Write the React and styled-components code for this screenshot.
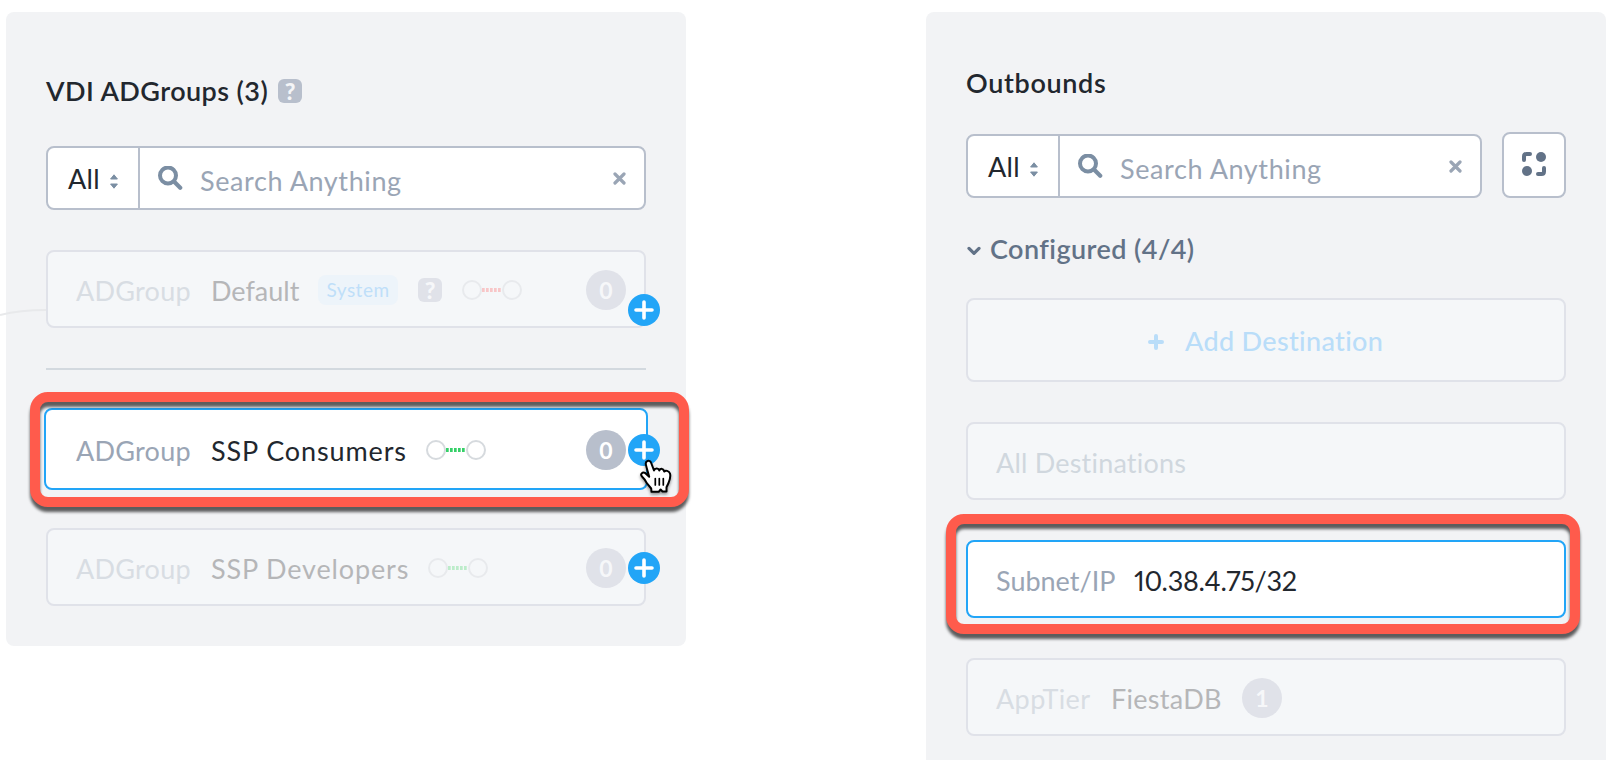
import React from "react";
import styled, { createGlobalStyle } from "styled-components";

const GlobalStyle = createGlobalStyle`
  *, *::before, *::after { box-sizing: border-box; }
  body {
    margin: 0;
    background: #fff;
    overflow: hidden;
    font-family: Lato, "Open Sans", sans-serif;
    font-size: 27px;
    line-height: 36px;
    color: #22272e;
  }
`;

const Page = styled.main`
  position: relative;
  display: flex;
  align-items: flex-start;
  gap: 240px;
  width: 1624px;
  height: 760px;
  padding: 12px 0 0 6px;
  overflow: hidden;
`;

const Panel = styled.section`
  flex: none;
  width: 680px;
  height: ${(p) => p.$height}px;
  padding: ${(p) => p.$top}px 40px 0;
  border-radius: 8px;
  background: #f2f3f5;
`;

const Label = styled.span`
  flex: none;
  width: ${(p) => p.$width}px;
  letter-spacing: ${(p) => p.$spacing || 0}px;
  white-space: nowrap;
`;

const Title = styled.h2`
  display: flex;
  align-items: center;
  height: 36px;
  margin: 0;
  font-size: 27px;
  font-weight: 600;
`;

const HelpBadge = styled.span`
  flex: none;
  width: 24px;
  height: 24px;
  margin-left: ${(p) => p.$gap}px;
  border-radius: 6px;
  background: ${(p) => (p.$muted ? "#e0e2e9" : "#b8bfcc")};
  color: ${(p) => (p.$muted ? "#f6f7f9" : "#f4f5f7")};
  font-size: 23px;
  font-weight: 900;
  line-height: 25px;
  text-align: center;
`;

const SearchRow = styled.div`
  display: flex;
  align-items: flex-end;
  gap: 20px;
  margin-top: ${(p) => p.$gap}px;
`;

const SearchBox = styled.div`
  display: flex;
  flex: 1;
  height: 64px;
  border: 2px solid #b8bfcc;
  border-radius: 8px;
  background: #fff;
`;

const Scope = styled.div`
  display: flex;
  align-items: center;
  width: 92px;
  padding: 2px 0 0 20px;
  border-right: 2px solid #b8bfcc;
  svg { margin: 4px 0 0 11px; }
`;

const SearchField = styled.div`
  display: flex;
  flex: 1;
  align-items: center;
  padding: 0 18px 0 18px;
  color: #9aa5b5;
`;

const Placeholder = styled(Label)`
  margin-left: 17px;
  padding-top: 5px;
`;

const ClearIcon = styled.svg`
  margin: 0 0 0 auto;
`;

const SquareButton = styled.button`
  display: flex;
  align-items: center;
  justify-content: center;
  width: 64px;
  height: 66px;
  padding: 0 0 2px;
  border: 2px solid #b8bfcc;
  border-radius: 8px;
  background: #fff;
`;

const Row = styled.div`
  position: relative;
  display: flex;
  align-items: center;
  height: ${(p) => (p.$selected ? 82 : 78)}px;
  margin: ${(p) => (p.$selected ? p.$gap - 2 : p.$gap)}px ${(p) => (p.$selected ? -2 : 0)}px ${(p) => (p.$selected ? -2 : 0)}px;
  padding: 2px 0 0 ${(p) => (p.$selected ? 30 : 28)}px;
  border: 2px solid ${(p) => (p.$active ? "#22a5f7" : "#e0e2e9")};
  border-radius: 8px;
  background: ${(p) => (p.$active ? "#fff" : "#f5f7f9")};
`;

const Kind = styled(Label)`
  padding-top: 1px;
  color: ${(p) => (p.$active ? "#9aa5b5" : p.$plain ? "#d0d7de" : "#d8dde3")};
`;

const Name = styled(Label)`
  margin-left: ${(p) => p.$gap}px;
  padding-top: 1px;
  color: ${(p) => (p.$active ? "#22272e" : "#b5b6b8")};
  font-variant-numeric: proportional-nums;
`;

const Tag = styled.span`
  flex: none;
  width: 80px;
  height: 30px;
  margin-left: 20px;
  border-radius: 8px;
  background: #edf4fa;
  color: #bfdff9;
  font-size: 19px;
  line-height: 29px;
  letter-spacing: 0.5px;
  text-align: center;
`;

const Link = styled.svg`
  flex: none;
  margin-left: ${(p) => p.$gap}px;
`;

const Count = styled.span`
  flex: none;
  width: 40px;
  height: 40px;
  margin-left: ${(p) => (p.$gap ? p.$gap + "px" : "auto")};
  margin-right: ${(p) => (p.$selected ? 20 : 18)}px;
  border-radius: 50%;
  background: ${(p) => (p.$active ? "#b8bfcc" : "#e0e2e9")};
  color: ${(p) => (p.$active ? "#fff" : "#f6f7f9")};
  font-size: 23px;
  font-weight: 700;
  line-height: 40px;
  text-align: center;
`;

const AddNode = styled.button`
  position: absolute;
  top: ${(p) => p.$top}px;
  right: ${(p) => (p.$selected ? -14 : -16)}px;
  width: 32px;
  height: 32px;
  padding: 0;
  border: 0;
  border-radius: 50%;
  background: #22a5f7;
  svg { display: block; }
`;

const Divider = styled.hr`
  height: 2px;
  margin: 40px 0 0;
  border: 0;
  background: #d3d9df;
`;

const GroupHeading = styled.div`
  display: flex;
  align-items: center;
  height: 36px;
  margin-top: 33px;
  color: #627287;
  font-weight: 600;
  svg { margin: 3px 9px 0 1px; }
`;

const AddRow = styled.button`
  display: flex;
  align-items: center;
  width: 600px;
  height: 84px;
  margin-top: 31px;
  padding: 1px 0 0 180px;
  border: 2px solid #e0e2e9;
  border-radius: 8px;
  background: #f5f7f9;
  color: #b9ddf9;
  font-family: inherit;
  font-size: 27px;
  font-weight: 500;
  line-height: 36px;
  text-align: left;
  svg { margin: 2px 21px 0 0; }
`;

const Highlight = styled.div`
  position: absolute;
  left: ${(p) => p.$x}px;
  top: ${(p) => p.$y}px;
  width: ${(p) => p.$w}px;
  height: ${(p) => p.$h}px;
  border: 10px solid #ff5b4c;
  border-radius: 18px;
  filter: drop-shadow(0 5px 1.5px rgba(0, 0, 0, 0.62));
  pointer-events: none;
`;

const Cursor = styled.svg`
  position: absolute;
  left: 638px;
  top: 458px;
  filter: drop-shadow(0 2px 1.5px rgba(0, 0, 0, 0.4));
`;

const Wire = styled.svg`
  position: absolute;
  left: 0;
  top: 304px;
`;

function Search({ gap, trailing }) {
  return (
    <SearchRow $gap={gap}>
      <SearchBox>
        <Scope>
          <Label $width={31} $spacing={0.3}>All</Label>
          <svg width="8" height="15" viewBox="0 0 8 15" fill="#7b8ea3" stroke="#7b8ea3" strokeLinejoin="round">
            <path d="M4 .8 7.4 5H.6zM4 14.2 7.4 10H.6z" />
          </svg>
        </Scope>
        <SearchField>
          <svg width="25" height="25" viewBox="0 0 25 25" fill="none" stroke="#7b8ea3">
            <circle cx="10" cy="9.5" r="8" strokeWidth="4" />
            <path d="m16 15.500 6.200 6.200" strokeWidth="4.2" strokeLinecap="round" />
          </svg>
          <Placeholder $width={202} $spacing={0.6}>Search Anything</Placeholder>
          <ClearIcon width="13" height="13" viewBox="0 0 13 13" stroke="#9aa5b5" strokeWidth="3.2" strokeLinecap="round">
            <path d="m2 2 9 9M11 2l-9 9" />
          </ClearIcon>
        </SearchField>
      </SearchBox>
      {trailing}
    </SearchRow>
  );
}

function Connection({ gap, circle, dash }) {
  return (
    <Link $gap={gap} width="60" height="20" viewBox="0 0 60 20" fill="none">
      <circle cx="10" cy="10" r="9" stroke={circle} strokeWidth="2" />
      <circle cx="50" cy="10" r="9" stroke={circle} strokeWidth="2" />
      <path d="M20 10h20" stroke={dash} strokeWidth="4" strokeDasharray="2.7 1.3" />
    </Link>
  );
}

function AddButton({ top, selected }) {
  return (
    <AddNode $top={top} $selected={selected} aria-label="Add">
      <svg width="32" height="32" viewBox="0 0 32 32" stroke="#fff" strokeWidth="3.600" strokeLinecap="round">
        <path d="M16 8v16M8 16h16" />
      </svg>
    </AddNode>
  );
}

export default function App() {
  return (
    <>
      <GlobalStyle />
      <Page>
        <Panel $height={634} $top={61}>
          <Title>
            <Label $width={224} $spacing={0.43}>VDI ADGroups (3)</Label>
            <HelpBadge $gap={8}>?</HelpBadge>
          </Title>
          <Search gap={37} />
          <Row $gap={40}>
            <Kind $width={116} $spacing={0.25}>ADGroup</Kind>
            <Name $gap={19} $width={87} $spacing={0}>Default</Name>
            <Tag>System</Tag>
            <HelpBadge $gap={20} $muted>?</HelpBadge>
            <Connection gap={20} circle="#e8eaed" dash="#f8c6c8" />
            <Count>0</Count>
            <AddButton top={42} />
          </Row>
          <Divider />
          <Row $gap={40} $active $selected>
            <Kind $active $width={116} $spacing={0.25}>ADGroup</Kind>
            <Name $active $gap={19} $width={196} $spacing={0.88}>SSP Consumers</Name>
            <Connection gap={19} circle="#d6dade" dash="#36d068" />
            <Count $active $selected>0</Count>
            <AddButton top={24} selected />
          </Row>
          <Row $gap={40}>
            <Kind $width={116} $spacing={0.25}>ADGroup</Kind>
            <Name $gap={19} $width={198} $spacing={0.85}>SSP Developers</Name>
            <Connection gap={19} circle="#e8eaed" dash="#bcecca" />
            <Count>0</Count>
            <AddButton top={22} />
          </Row>
        </Panel>

        <Panel $height={760} $top={53}>
          <Title>
            <Label $width={140} $spacing={0.65}>Outbounds</Label>
          </Title>
          <Search
            gap={31}
            trailing={
              <SquareButton aria-label="Arrange">
                <svg width="24" height="24" viewBox="0 0 24 24" fill="#627287">
                  <circle cx="19" cy="5" r="5" />
                  <circle cx="5" cy="19" r="5" />
                  <path d="M2 8V4.5Q2 2 4.5 2H8M22 16v3.500Q22 22 19.500 22H16" fill="none" stroke="#627287" strokeWidth="4" strokeLinecap="round" />
                </svg>
              </SquareButton>
            }
          />
          <GroupHeading>
            <svg width="14" height="10" viewBox="0 0 14 10" fill="none" stroke="#627287" strokeWidth="3.2" strokeLinecap="round" strokeLinejoin="round">
              <path d="m2 2.400 5 5 5-5" />
            </svg>
            <Label $width={206} $spacing={0.43}>Configured (4/4)</Label>
          </GroupHeading>
          <AddRow>
            <svg width="16" height="16" viewBox="0 0 16 16" stroke="#b9ddf9" strokeWidth="4" strokeLinecap="round">
              <path d="M8 2v12M2 8h12" />
            </svg>
            <Label $width={200} $spacing={0.33}>Add Destination</Label>
          </AddRow>
          <Row $gap={40}>
            <Kind $plain $width={192} $spacing={0.2}>All Destinations</Kind>
          </Row>
          <Row $gap={40} $active>
            <Kind $active $width={120} $spacing={0}>Subnet/IP</Kind>
            <Name $active $gap={18} $width={164} $spacing={-0.3}>10.38.4.75/32</Name>
          </Row>
          <Row $gap={40}>
            <Kind $width={96} $spacing={0.4}>AppTier</Kind>
            <Name $gap={19} $width={112} $spacing={0.3}>FiestaDB</Name>
            <Count $gap={19}>1</Count>
          </Row>
        </Panel>

        <Wire width="46" height="14" viewBox="0 0 46 14" fill="none">
          <path d="M0 11Q20 6 46 6" stroke="#e8e9eb" strokeWidth="2" />
        </Wire>
        <Highlight $x={30} $y={392} $w={659} $h={115} />
        <Highlight $x={946} $y={514} $w={634} $h={120} />
        <Cursor width="36" height="38" viewBox="0 0 36 38" fill="none">
          <path
            d="M9.500 3C11.200 2.400 12.600 3.200 13.200 5L16 12.500C17 9.800 20.500 9.700 21.300 12.500C22.500 10 25.600 10.400 26.200 13.600C27.300 11.900 31 12.700 32 15.500C33 19 31.700 22.200 30.400 25.300L28.500 29.300V33.500H24.500L22.600 31.500L20.700 33.800H13.500L13.200 30.500L8.800 25.200C7.700 22.500 6.200 20.600 4.200 18.700C1.700 16.300 4.500 13.300 7.400 15.200L11.200 18.800C10.200 14.500 8.700 10.500 7.900 6.600C7.500 4.700 7.800 3.600 9.500 3Z"
            fill="#fff"
            stroke="#000"
            strokeWidth="2"
            strokeLinejoin="round"
          />
          <path d="M17.300 20.500v6.500M21.300 20.500v6.500M25.300 20.500v6.500" stroke="#000" strokeWidth="1.700" strokeLinecap="round" />
        </Cursor>
      </Page>
    </>
  );
}
